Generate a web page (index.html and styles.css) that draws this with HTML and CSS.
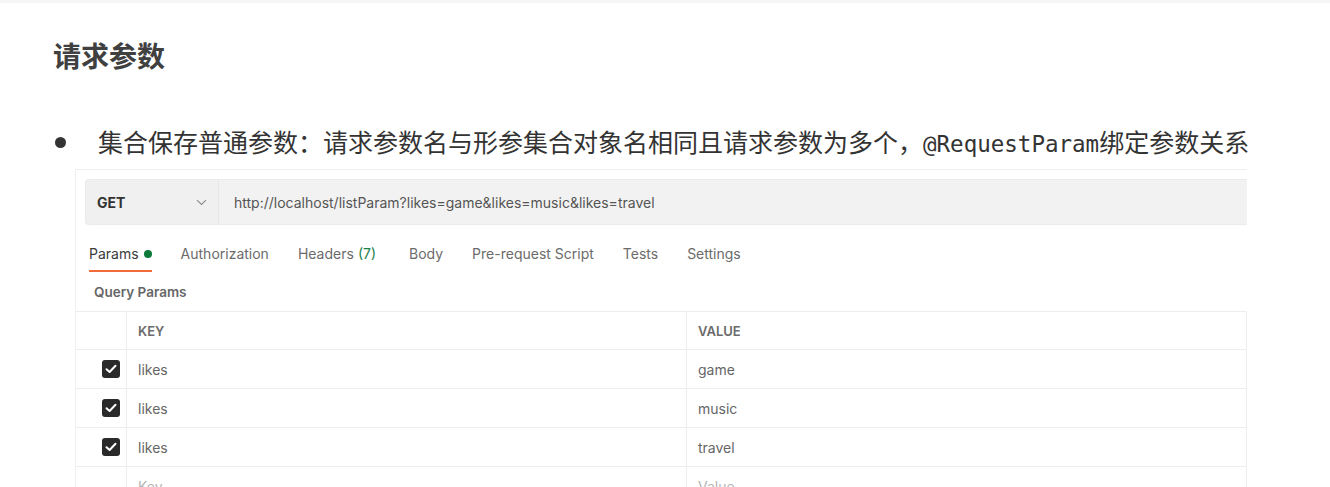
FILE: index.html
```html
<!DOCTYPE html>
<html lang="zh-CN">
<head>
<meta charset="utf-8">
<title>请求参数</title>
<link rel="stylesheet" href="styles.css">
</head>
<body>
<div class="doc">
  <h1 class="title">请求参数</h1>
  <ul class="list">
    <li class="item"><span class="dot"></span><span class="item-text">集合保存普通参数：请求参数名与形参集合对象名相同且请求参数为多个，<code class="mono">@RequestParam</code>绑定参数关系</span></li>
  </ul>
  <div class="shot">
    <div class="reqbar">
      <div class="method">
        <span class="method-name">GET</span>
        <svg class="chev" width="11" height="7" viewBox="0 0 11 7"><path d="M1 1.2 L5.5 5.5 L10 1.2" fill="none" stroke="#8a8a8a" stroke-width="1.1"/></svg>
      </div>
      <div class="url">http://localhost/listParam?likes=game&amp;likes=music&amp;likes=travel</div>
    </div>
    <div class="tabs">
      <div class="tab active">Params <span class="gdot"></span></div>
      <div class="tab">Authorization</div>
      <div class="tab">Headers <span class="green">(7)</span></div>
      <div class="tab tab-body">Body</div>
      <div class="tab">Pre-request Script</div>
      <div class="tab">Tests</div>
      <div class="tab">Settings</div>
    </div>
    <div class="qp">Query Params</div>
    <div class="table">
      <div class="row head">
        <div class="c1"></div>
        <div class="c2">KEY</div>
        <div class="c3">VALUE</div>
      </div>
      <div class="row">
        <div class="c1"><span class="cb"><svg width="12" height="10" viewBox="0 0 12 10"><path d="M1.5 5.2 L4.6 8 L10.5 1.8" fill="none" stroke="#fff" stroke-width="2" stroke-linecap="round" stroke-linejoin="round"/></svg></span></div>
        <div class="c2">likes</div>
        <div class="c3">game</div>
      </div>
      <div class="row">
        <div class="c1"><span class="cb"><svg width="12" height="10" viewBox="0 0 12 10"><path d="M1.5 5.2 L4.6 8 L10.5 1.8" fill="none" stroke="#fff" stroke-width="2" stroke-linecap="round" stroke-linejoin="round"/></svg></span></div>
        <div class="c2">likes</div>
        <div class="c3">music</div>
      </div>
      <div class="row">
        <div class="c1"><span class="cb"><svg width="12" height="10" viewBox="0 0 12 10"><path d="M1.5 5.2 L4.6 8 L10.5 1.8" fill="none" stroke="#fff" stroke-width="2" stroke-linecap="round" stroke-linejoin="round"/></svg></span></div>
        <div class="c2">likes</div>
        <div class="c3">travel</div>
      </div>
      <div class="row">
        <div class="c1"></div>
        <div class="c2 ph">Key</div>
        <div class="c3 ph">Value</div>
      </div>
    </div>
  </div>
</div>
</body>
</html>
```

FILE: styles.css
```css
html, body {
  margin: 0;
  padding: 0;
  background: #ffffff;
}
body {
  border-top: 3px solid #f6f6f6;
  overflow: hidden;
  height: 484px;
}
.doc {
  padding-left: 53px;
  font-family: "Noto Sans CJK SC", "Noto Sans", sans-serif;
  color: #333333;
}
.title {
  margin: 0;
  padding-top: 37px;
  font-size: 28px;
  line-height: 30px;
  font-weight: 700;
  color: #404040;
}
.list {
  list-style: none;
  margin: 55px 0 0 0;
  padding: 0;
}
.item {
  display: flex;
  align-items: center;
  height: 34px;
}
.dot {
  width: 11px;
  height: 11px;
  border-radius: 50%;
  background: #333;
  margin-left: 2px;
  margin-right: 32px;
  flex: none;
}
.item-text {
  font-size: 25px;
  line-height: 34px;
  white-space: nowrap;
  color: #333;
}
.mono {
  font-family: "DejaVu Sans Mono", "Liberation Mono", monospace;
  font-size: 22.5px;
}
.shot {
  margin: 10px 0 0 22px;
  width: 1171px;
  border-top: 1px solid #efefef;
  border-left: 1px solid #efefef;
  font-family: Inter, "Noto Sans", sans-serif;
}
.reqbar {
  display: flex;
  margin: 9px 0 0 9px;
  height: 46px;
  background: #f2f2f2;
  border: 1px solid #ebebeb;
  border-right: none;
  border-radius: 4px 0 0 4px;
  box-sizing: border-box;
}
.method {
  width: 133px;
  display: flex;
  align-items: center;
  justify-content: space-between;
  padding: 0 11px 0 11px;
  box-sizing: border-box;
  border-right: 1px solid #e6e6e6;
  background: #f0f0f0;
  border-radius: 4px 0 0 4px;
}
.method-name {
  font-weight: 700;
  font-size: 14px;
  color: #333;
}
.url {
  display: flex;
  align-items: center;
  padding-left: 15px;
  font-size: 14px;
  color: #555;
}
.tabs {
  display: flex;
  gap: 29px;
  padding-left: 13px;
  font-size: 14px;
  color: #6b6b6b;
}
.tab {
  padding-top: 19px;
  line-height: 20px;
  padding-bottom: 6px;
  border-bottom: 2px solid transparent;
  display: flex;
  align-items: center;
  white-space: nowrap;
}
.tab-body {
  margin-left: 4px;
}
.tab.active {
  color: #3a3a3a;
  border-bottom-color: #f26b3a;
}
.gdot {
  display: inline-block;
  width: 8px;
  height: 8px;
  border-radius: 50%;
  background: #0b7a3b;
  margin-left: 5px;
}
.green {
  color: #1b8049;
  margin-left: 4px;
}
.qp {
  margin: 10px 0 9px 18px;
  line-height: 20px;
  font-size: 13.5px;
  font-weight: 600;
  color: #666;
}
.table {
  border-top: 1px solid #ededed;
  border-right: 1px solid #ededed;
  font-size: 14px;
  color: #666;
}
.row {
  display: flex;
  height: 39px;
  border-bottom: 1px solid #ededed;
  box-sizing: border-box;
}
.row.head {
  height: 38px;
  font-size: 13px;
  font-weight: 600;
  color: #6b6b6b;
}
.c1 {
  width: 51px;
  flex: none;
  display: flex;
  align-items: center;
  padding-left: 26px;
  box-sizing: border-box;
  border-right: 1px solid #ededed;
}
.c2 {
  width: 560px;
  flex: none;
  display: flex;
  align-items: center;
  padding-left: 11px;
  box-sizing: border-box;
  border-right: 1px solid #ededed;
}
.c3 {
  flex: 1;
  display: flex;
  align-items: center;
  padding-left: 11px;
}
.ph {
  color: #b5b5b5;
}
.cb {
  width: 18px;
  height: 18px;
  border-radius: 3px;
  background: #2a2a2a;
  display: flex;
  align-items: center;
  justify-content: center;
}
```
